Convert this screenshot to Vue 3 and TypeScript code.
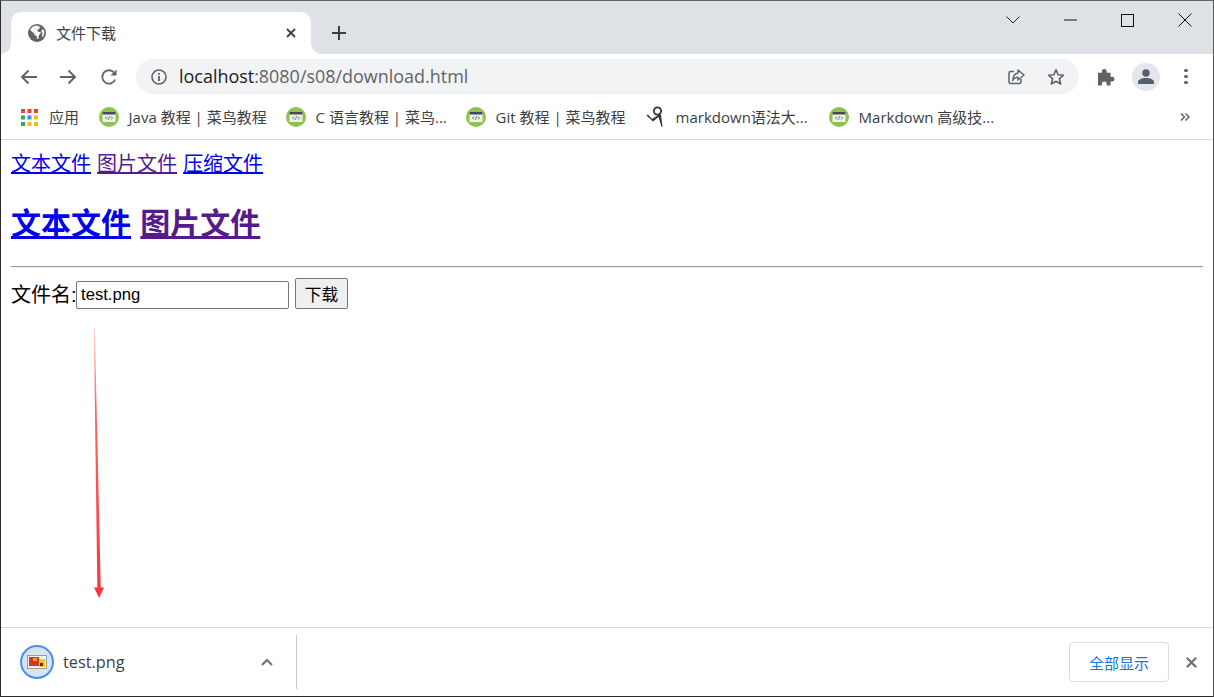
<script setup lang="ts">
const bookmarks = [
  { t: 'Java 教程 | 菜鸟教程', w: 187, kind: 'r' },
  { t: 'C 语言教程 | 菜鸟...', w: 180, kind: 'r' },
  { t: 'Git 教程 | 菜鸟教程', w: 180, kind: 'r' },
  { t: 'markdown语法大...', w: 183, kind: 'm' },
  { t: 'Markdown 高级技...', w: 190, kind: 'r' },
]
</script>

<template>
  <div class="win">
    <div class="strip">
      <div class="tab">
        <svg class="globe" width="18" height="18" viewBox="0 0 18 18"><circle cx="9" cy="9" r="9" fill="#5f6368"/><path d="M9 1.600c.9.600 2 1 3 1.200l-.6 2-2 .9.800 2 3 .800-2.400 3-.3 3-1.500.700v-2.600L6.500 11V9.700L2 6c1-2.400 3.800-4.400 7-4.400zM15 5c1 1.300 1.500 2.700 1.400 4.300L15 13l-1.200-.4.700-3.600-1.500-2z" fill="#fff" opacity="0.95"/></svg>
        <span class="tab-title">文件下载</span>
        <svg class="tab-x" width="12" height="12" viewBox="0 0 12 12"><path d="M2 2l8 8M10 2l-8 8" stroke="#3c4043" stroke-width="1.800" fill="none"/></svg>
      </div>
      <svg class="plus" width="16" height="16" viewBox="0 0 16 16"><path d="M8 1v14M1 8h14" stroke="#3c4043" stroke-width="2" fill="none"/></svg>
      <div class="spacer"></div>
      <div class="caption">
        <svg width="14" height="8" viewBox="0 0 14 8"><path d="M.5.500L7 7l6.500-6.500" stroke="#222" fill="none"/></svg>
        <svg class="c-min" width="13" height="2" viewBox="0 0 13 2"><path d="M0 1h13" stroke="#111" fill="none"/></svg>
        <svg class="c-max" width="13" height="13" viewBox="0 0 13 13"><rect x=".5" y=".5" width="12" height="12" stroke="#111" fill="none"/></svg>
        <svg class="c-close" width="14" height="14" viewBox="0 0 14 14"><path d="M.5.500l13 13M13.500.500l-13 13" stroke="#111" fill="none"/></svg>
      </div>
    </div>

    <div class="toolbar">
      <svg class="nav" width="17" height="16" viewBox="0 0 17 16"><path d="M17 8H2M8.500 1.500L2 8l6.500 6.500" stroke="#5f6368" stroke-width="1.900" fill="none"/></svg>
      <svg class="nav" width="17" height="16" viewBox="0 0 17 16"><path d="M0 8h15M8.500 1.500L15 8l-6.500 6.500" stroke="#5f6368" stroke-width="1.900" fill="none"/></svg>
      <svg class="nav" width="18" height="18" viewBox="0 0 18 18"><path d="M15.200 11.500A6.700 6.700 0 1 1 14 4.500" stroke="#5f6368" stroke-width="1.800" fill="none"/><path d="M16.500 1.500v6h-6z" fill="#5f6368"/></svg>
      <div class="omni">
        <svg width="16" height="16" viewBox="0 0 16 16"><circle cx="8" cy="8" r="7" stroke="#5f6368" stroke-width="1.600" fill="none"/><path d="M8 7v5M8 4v1.800" stroke="#5f6368" stroke-width="1.800" fill="none"/></svg>
        <span class="url"><b>localhost</b>:8080/s08/download.html</span>
        <svg class="share" width="18" height="18" viewBox="0 0 18 18"><path d="M7 3.500H3.500a1.500 1.500 0 0 0-1.500 1.500v9a1.500 1.500 0 0 0 1.500 1.500h9a1.500 1.500 0 0 0 1.500-1.500v-3" stroke="#5f6368" stroke-width="1.500" fill="none"/><path d="M11 2l6 5-6 5V9.300C8.500 9.300 6.800 10.300 5.800 12.500 6 8.500 8 5.500 11 5z" stroke="#5f6368" stroke-width="1.400" fill="none" stroke-linejoin="round"/></svg>
        <svg class="star" width="18" height="18" viewBox="0 0 18 18"><path d="M9 1.800l2.100 5 5.400.4-4.100 3.500 1.300 5.300L9 13.200l-4.700 2.800 1.300-5.300L1.500 7.200l5.400-.4z" stroke="#5f6368" stroke-width="1.600" fill="none" stroke-linejoin="round"/></svg>
      </div>
      <svg class="ext" width="18" height="18" viewBox="0 0 18 18"><path d="M1 5h4V3.500a2.500 2.500 0 0 1 5 0V5h4v4h1.500a2.500 2.500 0 0 1 0 5H14v4h-4v-1.500a2.500 2.500 0 0 0-5 0V18H1z" fill="#5f6368" transform="scale(.97)"/></svg>
      <div class="avatar">
        <svg width="16" height="16" viewBox="0 0 16 16"><circle cx="8" cy="4" r="3.700" fill="#545f70"/><path d="M0 15v-2c0-2.500 4-4 8-4s8 1.500 8 4v2z" fill="#545f70"/></svg>
      </div>
      <div class="dots"><i></i><i></i><i></i></div>
    </div>

    <div class="bookmarks">
      <svg class="apps" width="17" height="17" viewBox="0 0 17 17">
        <g fill="#ea4335"><rect width="4" height="4"/><rect x="6.500" width="4" height="4"/><rect x="13" width="4" height="4"/></g>
        <rect y="6.500" width="4" height="4" fill="#34a853"/><rect x="6.500" y="6.500" width="4" height="4" fill="#4285f4"/><rect x="13" y="6.500" width="4" height="4" fill="#fbbc04"/>
        <rect y="13" width="4" height="4" fill="#34a853"/><rect x="6.500" y="13" width="4" height="4" fill="#fbbc04"/><rect x="13" y="13" width="4" height="4" fill="#fbbc04"/>
      </svg>
      <span class="bm-apps">应用</span>
      <div v-for="b in bookmarks" :key="b.t" class="bm" :style="{ width: b.w + 'px' }">
        <svg v-if="b.kind === 'r'" width="20" height="20" viewBox="0 0 20 20"><circle cx="10" cy="10" r="10" fill="#8dc24f"/><rect x="3.500" y="5" width="13" height="10" fill="#eef1e8"/><rect x="3.500" y="5" width="13" height="2.500" fill="#3f4d5a"/><path d="M8 9.500l-1.500 1.500L8 12.500M12 9.500l1.500 1.500L12 12.500M10.600 9.300l-1.200 3.400" stroke="#555" stroke-width=".8" fill="none"/></svg>
        <svg v-else width="20" height="22" viewBox="0 0 20 22"><circle cx="11.500" cy="5" r="3.600" stroke="#333" stroke-width="1.800" fill="none"/><path d="M.5 9.500l1.500-1 4 4.500 6.500-4 2.400-.5 1.600 12-1 .2-3-9.700-5.500 4.500z" fill="#333"/></svg>
        <span class="bm-text">{{ b.t }}</span>
      </div>
      <div class="spacer"></div>
      <svg class="more" width="10" height="10" viewBox="0 0 10 10"><path d="M1 1.500L4.500 5 1 8.500M5.500 1.500L9 5 5.500 8.500" stroke="#5f6368" stroke-width="1.500" fill="none"/></svg>
    </div>

    <main class="page">
      <div class="links">
        <a href="#" class="lk">文本文件</a> <a href="#" class="lk visited">图片文件</a> <a href="#" class="lk">压缩文件</a>
      </div>
      <h2 class="heading"><a href="#" class="lk">文本文件</a> <a href="#" class="lk visited">图片文件</a></h2>
      <hr class="rule" />
      <form class="form" @submit.prevent>
        <span class="lab">文件名:</span><input class="inp" value="test.png" /><button class="btn">下载</button>
      </form>
      <svg class="arrow" width="20" height="275" viewBox="0 0 20 275">
        <defs><linearGradient id="ag" x1="0" y1="0" x2="0" y2="1"><stop offset="0" stop-color="#ff3b42" stop-opacity=".25"/><stop offset=".3" stop-color="#ff3b42" stop-opacity=".8"/><stop offset="1" stop-color="#f9353c"/></linearGradient></defs>
        <path d="M3.800 0L4.800 0 10.800 262 7.400 262z" fill="url(#ag)"/>
        <path d="M4 259.500H14L9.200 270z" fill="#f9353c"/>
      </svg>
    </main>

    <footer class="dl">
      <div class="file">
        <div class="ring">
          <svg width="20" height="14" viewBox="0 0 20 14"><rect x=".4" y=".4" width="19.200" height="13.200" fill="#f4f4f0" stroke="#888" stroke-width=".8"/><rect x="2" y="2" width="10" height="9" fill="#d8352a"/><rect x="6" y="3" width="4" height="3" fill="#f0a030"/><rect x="12" y="4" width="6" height="8" fill="#f2c81e"/><rect x="13" y="8" width="3" height="3" fill="#7a1a10"/></svg>
        </div>
        <span class="fname">test.png</span>
        <svg class="caret" width="12" height="8" viewBox="0 0 12 8"><path d="M1 7l5-5 5 5" stroke="#6e7175" stroke-width="2" fill="none"/></svg>
      </div>
      <div class="sep"></div>
      <div class="spacer"></div>
      <button class="all">全部显示</button>
      <svg class="dl-x" width="11" height="11" viewBox="0 0 11 11"><path d="M.8.800l9.400 9.400M10.200.800L.8 10.200" stroke="#6e7175" stroke-width="2.200" fill="none"/></svg>
    </footer>
  </div>
</template>

<style scoped>
.win {
  position: relative;
  box-sizing: border-box;
  width: 1214px;
  height: 697px;
  border: 1px solid #2b2b2b;
  border-top-color: #666;
  border-right-color: #555;
  background: #fff;
  display: flex;
  flex-direction: column;
  overflow: hidden;
  font-family: "Open Sans", "Noto Sans CJK SC", sans-serif;
}
.spacer { flex: 1; }
.strip {
  height: 53px;
  background: #dee1e6;
  display: flex;
  align-items: flex-start;
  flex: none;
}
.tab {
  position: relative;
  margin: 11px 20px 0 10px;
  width: 300px;
  height: 42px;
  box-sizing: border-box;
  padding: 0 14px 0 17px;
  background: #fff;
  border-radius: 10px 10px 0 0;
  display: flex;
  align-items: center;
}
.tab::before,
.tab::after {
  content: "";
  position: absolute;
  bottom: 0;
  width: 10px;
  height: 10px;
}
.tab::before {
  left: -10px;
  background: radial-gradient(circle at 0 0, #dee1e6 9.500px, #fff 10px);
}
.tab::after {
  right: -10px;
  background: radial-gradient(circle at 100% 0, #dee1e6 9.500px, #fff 10px);
}
.globe { flex: none; }
.tab-title {
  margin-left: 10px;
  padding-bottom: 2px;
  font-size: 15px;
  color: #3c4043;
  flex: 1;
}
.plus { margin-top: 24px; }
.caption {
  display: flex;
  align-items: center;
  height: 38px;
  padding-right: 21px;
}
.c-min { margin-left: 44px; }
.c-max { margin-left: 44px; }
.c-close { margin-left: 44px; }
.toolbar {
  height: 45px;
  flex: none;
  display: flex;
  align-items: center;
  padding: 0 0 0 19px;
  box-sizing: border-box;
}
.nav { flex: none; margin-right: 23px; }
.nav:nth-child(3) { margin-right: 18px; }
.omni {
  width: 943px;
  height: 35px;
  background: #f1f3f4;
  border-radius: 18px;
  display: flex;
  align-items: center;
  box-sizing: border-box;
  padding: 0 14px 0 15px;
}
.url {
  margin-left: 12px;
  padding-bottom: 2px;
  font-size: 17.950px;
  color: #5f6368;
  flex: 1;
  font-family: "Open Sans", sans-serif;
}
.url b { font-weight: 400; color: #202124; }
.share { margin-right: 22px; }
.ext { margin-left: 18px; flex: none; }
.avatar {
  margin-left: 17px;
  width: 28px;
  height: 28px;
  border-radius: 50%;
  background: #e3e6ea;
  display: flex;
  align-items: center;
  justify-content: center;
  flex: none;
}
.dots {
  margin-left: 24px;
  display: flex;
  flex-direction: column;
  gap: 2.500px;
}
.dots i {
  display: block;
  width: 3.500px;
  height: 3.500px;
  border-radius: 50%;
  background: #5f6368;
}
.bookmarks {
  height: 41px;
  flex: none;
  box-sizing: border-box;
  border-bottom: 1px solid #d8dadd;
  display: flex;
  align-items: center;
  padding: 0 23px 4px 20px;
  font-size: 15px;
  color: #3c4043;
}
.bm-apps { margin-left: 11px; width: 50px; padding-bottom: 2px; }
.bm { display: flex; align-items: center; gap: 9.600px; flex: none; white-space: nowrap; }
.bm-text { padding-bottom: 2px; }
.page {
  position: relative;
  flex: 1;
  min-height: 0;
  padding: 11px 10px 0;
  font-family: "Liberation Sans", "Noto Sans CJK SC", sans-serif;
  font-size: 20px;
  color: #000;
}
.links { line-height: 27px; height: 27px; white-space: nowrap; word-spacing: .5px; }
.lk { color: #0000ee; text-decoration: underline; }
.visited { color: #551a8b; }
.heading {
  margin: 25px 0 0;
  font-size: 30px;
  line-height: 42px;
  height: 42px;
  font-weight: 700;
  white-space: nowrap;
  word-spacing: 1px;
}
.rule {
  margin: 21px 0 0;
  height: 0;
  border: none;
  border-top: 1px solid #9a9a9a;
  border-bottom: 1px solid #eee;
}
.form {
  display: flex;
  align-items: flex-end;
  margin-top: 10px;
  height: 31px;
}
.lab { line-height: 28px; width: 65px; white-space: nowrap; }
.inp {
  box-sizing: border-box;
  width: 213px;
  height: 28px;
  padding: 1px 4px;
  border: 1px solid #767676;
  border-radius: 2px;
  font-family: "Liberation Sans", sans-serif;
  font-size: 16.670px;
  outline: none;
  color: #000;
}
.btn {
  box-sizing: border-box;
  margin-left: 6px;
  width: 53px;
  height: 31px;
  padding: 0;
  border: 1px solid #767676;
  border-radius: 2px;
  background: #efefef;
  font-family: "Liberation Sans", "Noto Sans CJK SC", sans-serif;
  font-size: 16.670px;
  color: #000;
}
.arrow { position: absolute; left: 89px; top: 188px; }
.dl {
  height: 69px;
  flex: none;
  box-sizing: border-box;
  border-top: 1px solid #d9dbde;
  display: flex;
  align-items: center;
  padding: 0 16px 0 19px;
}
.file { display: flex; align-items: center; width: 253px; flex: none; }
.ring {
  box-sizing: border-box;
  width: 34px;
  height: 34px;
  border-radius: 50%;
  border: 2px solid #4c8fe8;
  background: #d6e4f6;
  display: flex;
  align-items: center;
  justify-content: center;
  flex: none;
}
.fname {
  margin-left: 9px;
  font-size: 16.300px;
  color: #3c4043;
  flex: 1;
}
.sep { margin-left: 23px; width: 1px; height: 54px; background: #c8cacc; }
.all {
  width: 100px;
  height: 40px;
  box-sizing: border-box;
  background: #fff;
  border: 1px solid #dadce0;
  border-radius: 4px;
  color: #1a73e8;
  font-family: "Noto Sans CJK SC", sans-serif;
  font-size: 15px;
  padding: 0;
}
.dl-x { margin-left: 17px; }
</style>
